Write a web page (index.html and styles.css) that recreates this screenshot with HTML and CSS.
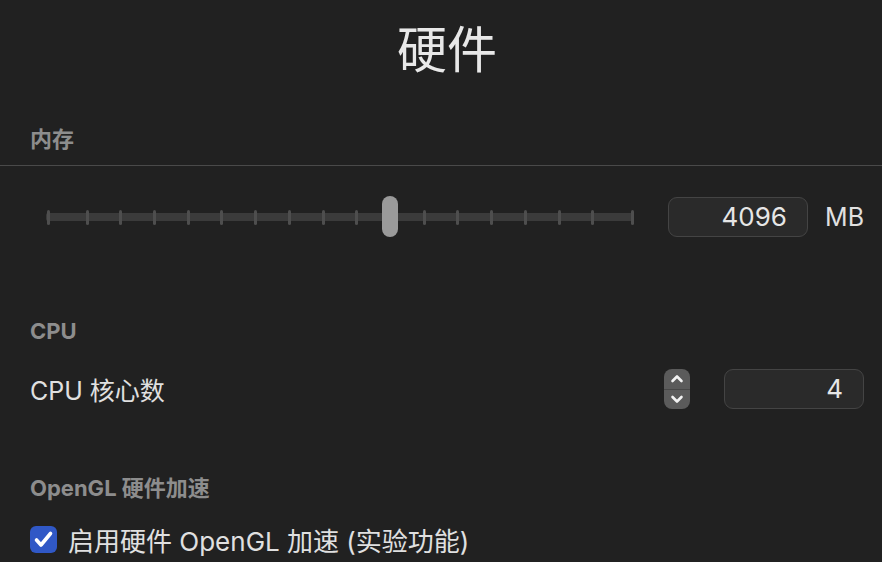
FILE: index.html
```html
<!DOCTYPE html>
<html lang="zh-CN">
<head>
<meta charset="utf-8">
<title>硬件</title>
<link rel="stylesheet" href="styles.css">
</head>
<body>
<div class="page">
  <h1 class="title">硬件</h1>

  <div class="section-label mem-label">内存</div>
  <div class="divider"></div>

  <div class="row slider-row">
    <div class="slider">
      <div class="track"></div>
      <div class="ticks">
        <span class="tick"></span>
        <div class="inner-ticks">
          <span class="tick"></span><span class="tick"></span><span class="tick"></span><span class="tick"></span>
          <span class="tick"></span><span class="tick"></span><span class="tick"></span><span class="tick"></span>
          <span class="tick"></span><span class="tick"></span><span class="tick"></span><span class="tick"></span>
          <span class="tick"></span><span class="tick"></span><span class="tick"></span><span class="tick"></span>
        </div>
        <span class="tick"></span>
      </div>
      <div class="thumb"></div>
    </div>
    <div class="field mem-field">4096</div>
    <div class="unit">MB</div>
  </div>

  <div class="section-label cpu-label">CPU</div>
  <div class="row cpu-row">
    <div class="row-label">CPU 核心数</div>
    <div class="stepper">
      <div class="step step-up">
        <svg width="14" height="9" viewBox="0 0 14 9"><path d="M2.5 7 L7 2.5 L11.5 7" fill="none" stroke="#f2f2f2" stroke-width="2.6" stroke-linecap="round" stroke-linejoin="round"/></svg>
      </div>
      <div class="step step-down">
        <svg width="14" height="9" viewBox="0 0 14 9"><path d="M2.5 2 L7 6.5 L11.5 2" fill="none" stroke="#f2f2f2" stroke-width="2.6" stroke-linecap="round" stroke-linejoin="round"/></svg>
      </div>
    </div>
    <div class="field cpu-field">4</div>
  </div>

  <div class="section-label gl-label">OpenGL 硬件加速</div>
  <label class="row check-row">
    <span class="checkbox">
      <svg width="27" height="27" viewBox="0 0 27 27"><path d="M6.5 14 L11 19 L20.5 7.5" fill="none" stroke="#ffffff" stroke-width="3.6" stroke-linecap="round" stroke-linejoin="round"/></svg>
    </span>
    <span class="check-text">启用硬件 OpenGL 加速 (实验功能)</span>
  </label>
</div>
</body>
</html>
```

FILE: styles.css
```css
html, body {
  margin: 0;
  padding: 0;
  background: #212121;
}

body {
  font-family: Inter, "Noto Sans CJK SC", sans-serif;
  color: #e0e0e0;
  width: 882px;
  height: 562px;
  overflow: hidden;
}

.page {
  display: flex;
  flex-direction: column;
}

.title {
  margin: 16px 0 0 0;
  font-size: 50px;
  line-height: 60px;
  font-weight: 400;
  text-align: center;
  color: #e8e8e8;
  font-family: "Noto Sans CJK SC", sans-serif;
  padding-left: 12px;
}

.section-label {
  padding-left: 30px;
  font-size: 22px;
  line-height: 28px;
  font-weight: 700;
  color: #8d8d8d;
}

.mem-label {
  margin-top: 49px;
}

.divider {
  margin-top: 12px;
  height: 1px;
  background: #4a4a4a;
}

.row {
  display: flex;
  align-items: center;
  padding-left: 30px;
  padding-right: 18px;
}

.slider-row {
  margin-top: 31px;
  height: 40px;
}

.slider {
  position: relative;
  margin-left: 16px;
  width: 588px;
  height: 40px;
  display: flex;
  align-items: center;
}

.track {
  position: absolute;
  left: 0;
  right: 0;
  top: 16px;
  height: 8px;
  background: #3b3b3b;
  border-radius: 2px;
}

.ticks {
  position: relative;
  flex: 1;
  display: flex;
  align-items: center;
  padding: 0 0.5px;
}

.inner-ticks {
  flex: 1;
  display: flex;
  justify-content: space-between;
  align-items: center;
  padding: 0 36px 0 36px;
}

.tick {
  width: 3px;
  height: 15px;
  border-radius: 1.5px;
  background: #4e4e4e;
}

.thumb {
  position: absolute;
  left: 336px;
  top: -1px;
  width: 16px;
  height: 41px;
  border-radius: 8px;
  background: #9a9a9a;
}

.field {
  box-sizing: border-box;
  width: 140px;
  height: 40px;
  border: 1px solid #444444;
  border-radius: 9px;
  background: #2a2a2a;
  text-align: right;
  font-size: 26px;
  line-height: 38px;
  color: #e6e6e6;
}

.mem-field {
  margin-left: 34px;
  padding-right: 20px;
}

.unit {
  margin-left: auto;
  font-size: 25px;
  color: #e0e0e0;
}

.cpu-label {
  margin-top: 80px;
}

.cpu-row {
  margin-top: 24px;
  height: 40px;
}

.row-label {
  flex: 1;
  font-size: 25px;
  color: #e0e0e0;
}

.stepper {
  width: 26px;
  height: 40px;
  border-radius: 8px;
  background: #5b5b5b;
  display: flex;
  flex-direction: column;
  overflow: hidden;
}

.step {
  flex: 1;
  display: flex;
  align-items: center;
  justify-content: center;
}

.step-up {
  border-bottom: 1px solid #474747;
}

.cpu-field {
  margin-left: 34px;
  padding-right: 20px;
}

.gl-label {
  margin-top: 65px;
}

.check-row {
  margin-top: 23px;
  height: 28px;
}

.checkbox {
  width: 27px;
  height: 27px;
  border-radius: 6px;
  background: #3058c6;
  display: flex;
  align-items: center;
  justify-content: center;
}

.check-text {
  margin-left: 11px;
  font-size: 26px;
  color: #e0e0e0;
}
```
